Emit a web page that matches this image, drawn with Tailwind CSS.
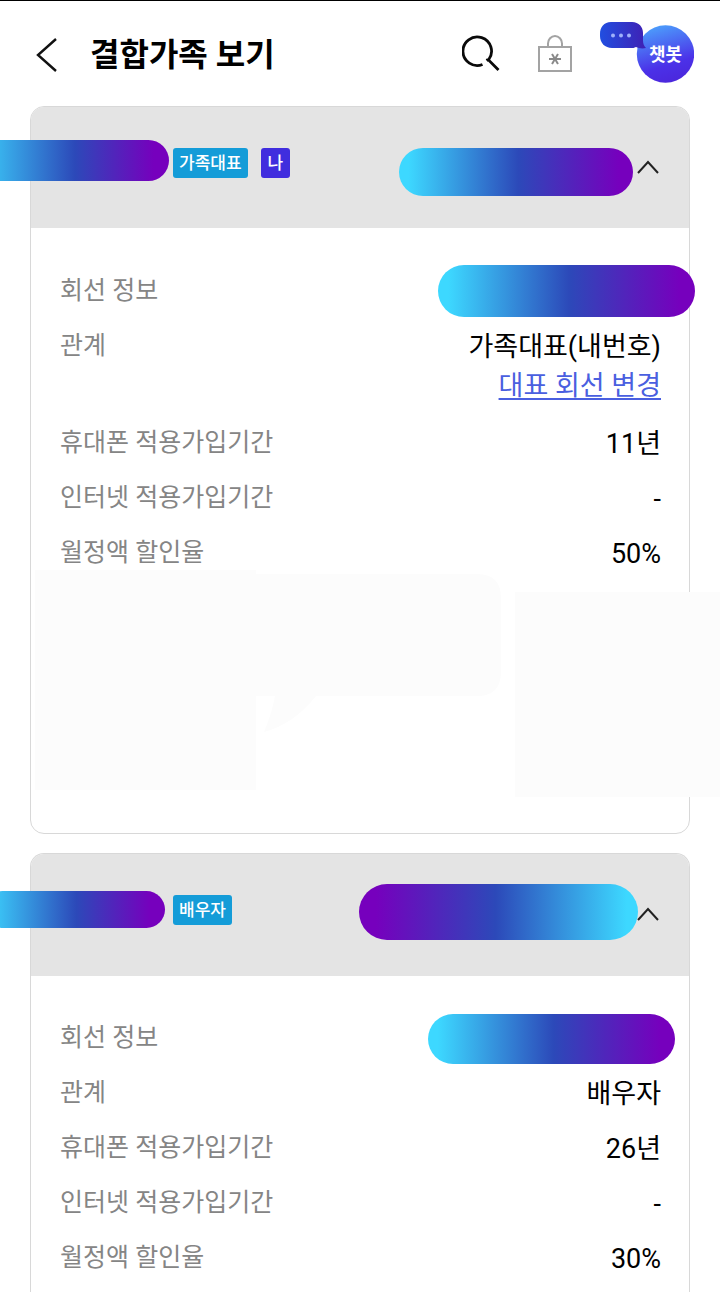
<!DOCTYPE html>
<html lang="ko">
<head>
<meta charset="utf-8">
<meta name="viewport" content="width=device-width, initial-scale=1">
<title>결합가족 보기</title>
<script src="https://cdn.jsdelivr.net/npm/@tailwindcss/browser@4"></script>
</head>
<body class="bg-white text-black font-[Roboto,'Noto_Sans_CJK_KR',sans-serif]">
<div class="flex min-h-screen flex-col overflow-hidden border-t border-black">
  <header class="flex h-[105px] shrink-0 items-center pl-[30px] pr-[26px]">
    <button type="button" aria-label="뒤로" class="w-[60px]">
      <svg class="h-[36px] w-[32px]" viewBox="0 0 32 36" fill="none" stroke="#111" stroke-width="2.4"><path d="M26 3 8 19l18 16" /></svg>
    </button>
    <h1 class="flex-1 pt-[2px] text-[32px] font-bold leading-10">결합가족 보기</h1>
    <div class="flex items-center pb-px">
      <button type="button" aria-label="검색" class="mr-[38px]">
        <svg class="block h-[38px] w-[38px]" viewBox="0 0 38 38" fill="none" stroke="#0a0a0a" stroke-width="2.8"><path d="M20.500 30.500A14.300 14.300 0 1 1 26.500 26L36.500 36M26 25.500l-1.500 1" /></svg>
      </button>
      <button type="button" aria-label="잠금" class="mr-[28px]">
        <svg class="block h-[38px] w-[34px]" viewBox="0 0 34 38" fill="none" stroke="#a3a3a3" stroke-width="2"><path d="M1 13h32v24H1zM10 13V9.500a7 7.500 0 0 1 14 0V13" /><path stroke="#8a8a8a" d="M11 25h12M14 20l6 10M20 20l-6 10" /></svg>
      </button>
      <button type="button" class="relative h-[62px] w-[94px]">
        <svg class="block h-[62px] w-[94px]" viewBox="0 0 94 62" aria-hidden="true">
          <defs>
            <linearGradient id="ball" x1=".3" y1="0" x2=".6" y2="1"><stop offset="0" stop-color="#4ca0fc" /><stop offset=".7" stop-color="#4b31e8" /><stop offset="1" stop-color="#4b27dc" /></linearGradient>
            <linearGradient id="talk"><stop offset="0" stop-color="#214ee0" /><stop offset="1" stop-color="#3f20b4" /></linearGradient>
          </defs>
          <circle cx="65.500" cy="32" r="28.700" fill="url(#ball)" />
          <path fill="url(#talk)" d="M11 0h21c7 0 11 5 11 11v7c0 4 1 6 3 8-4 1-8 0-10-1-2 1-3 1-5 1H12C5 26 0 21 0 14v-2C0 5 4 0 11 0z" />
          <g fill="#9fb0fa"><circle cx="13" cy="13.500" r="2" /><circle cx="21" cy="13.500" r="2" /><circle cx="29" cy="13.500" r="2" /></g>
        </svg>
        <span class="absolute left-[37px] top-[20px] w-[57px] text-center text-[18px] font-bold leading-[26px] text-white">챗봇</span>
      </button>
    </div>
  </header>

  <main class="flex flex-1 flex-col gap-[19px] px-[30px]">
    <section class="relative min-h-[728px] rounded-[14px] border border-[#d8d8d8]">
      <button type="button" aria-expanded="true" aria-label="가족대표 정보 접기" class="flex h-[121px] w-full items-center rounded-t-[13px] bg-[#e4e4e4] pb-[2px] pl-[142px] pr-[29px]">
        <span class="flex flex-1 gap-[13px] pb-2">
          <span class="rounded-[3px] bg-[#149cd8] px-[6px] text-[17px] font-medium leading-[30px] text-white">가족대표</span>
          <span class="rounded-[3px] bg-[#402dde] px-[7px] text-[17px] font-medium leading-[30px] text-white">나</span>
        </span>
        <svg class="h-[14px] w-[24px]" viewBox="0 0 24 14" fill="none" stroke="#222" stroke-width="2"><path d="M2 13 12 2l10 11" /></svg>
      </button>
      <span class="absolute -left-[50px] top-[33px] h-[41px] w-[188px] rounded-full bg-[linear-gradient(90deg,#3dd8ff_-5%,#2c49b9_50%,#7600bd_92%)]"></span>
      <span class="absolute right-[56px] top-[41px] h-[48px] w-[234px] rounded-full bg-[linear-gradient(90deg,#3dd8ff_4%,#2c49b9_51%,#7600bd_94%)]"></span>
      <dl class="flex flex-col gap-4 pl-[29px] pr-[28px] pt-[45px] text-[27px] leading-[39px]">
        <div class="flex justify-between">
          <dt class="text-[25px] leading-[36px] text-[#858585]">회선 정보</dt>
          <dd class="relative h-[39px] flex-1"><span class="absolute -right-[34px] -top-[8px] h-[52px] w-[257px] rounded-full bg-[linear-gradient(90deg,#3dd8ff_4%,#2c49b9_51%,#7600bd_94%)]"></span></dd>
        </div>
        <div class="flex justify-between pb-[3px]">
          <dt class="text-[25px] leading-[36px] text-[#858585]">관계</dt>
          <dd class="text-right">가족대표(내번호)<br><a href="#" class="text-[#4a5fe0] underline decoration-2 underline-offset-3">대표 회선 변경</a></dd>
        </div>
        <div class="flex justify-between"><dt class="text-[25px] leading-[36px] text-[#858585]">휴대폰 적용가입기간</dt><dd>11년</dd></div>
        <div class="flex justify-between"><dt class="text-[25px] leading-[36px] text-[#858585]">인터넷 적용가입기간</dt><dd>-</dd></div>
        <div class="flex justify-between"><dt class="text-[25px] leading-[36px] text-[#858585]">월정액 할인율</dt><dd>50%</dd></div>
      </dl>
      <!-- Faint shapes under the rows; the right one runs over the card's edge. -->
      <svg class="absolute left-[4px] top-[463px] h-[222px] w-[466px]" viewBox="0 0 466 222" fill="#fcfcfc" aria-hidden="true"><path d="M0 0h221v4h221q24 0 24 24v74q0 24-24 24H281q-22 28-52 36c4-10 8-20 11-36h-19v94H0z" /></svg>
      <div class="absolute -right-[31px] top-[485px] h-[205px] w-[205px] bg-[#fcfcfc]"></div>
    </section>

    <section class="relative flex-1 rounded-t-[14px] border border-b-0 border-[#d8d8d8]">
      <button type="button" aria-expanded="true" aria-label="배우자 정보 접기" class="flex h-[122px] w-full items-center rounded-t-[13px] bg-[#e4e4e4] pb-[2px] pl-[142px] pr-[29px]">
        <span class="flex flex-1 pb-2">
          <span class="rounded-[3px] bg-[#149cd8] px-[6px] text-[17px] font-medium leading-[30px] text-white">배우자</span>
        </span>
        <svg class="h-[14px] w-[24px]" viewBox="0 0 24 14" fill="none" stroke="#222" stroke-width="2"><path d="M2 13 12 2l10 11" /></svg>
      </button>
      <span class="absolute -left-[47px] top-[37px] h-[37px] w-[181px] rounded-full bg-[linear-gradient(90deg,#3dd8ff_0%,#2c49b9_51%,#7600bd_92%)]"></span>
      <span class="absolute right-[51px] top-[30px] h-[56px] w-[279px] rounded-full bg-[linear-gradient(90deg,#7600bd_6%,#2c49b9_49%,#3dd8ff_96%)]"></span>
      <dl class="flex flex-col gap-4 pl-[29px] pr-[28px] pt-[44px] text-[27px] leading-[39px]">
        <div class="flex justify-between">
          <dt class="text-[25px] leading-[36px] text-[#858585]">회선 정보</dt>
          <dd class="relative h-[39px] flex-1"><span class="absolute -right-[14px] -top-[6px] h-[50px] w-[247px] rounded-full bg-[linear-gradient(90deg,#3dd8ff_4%,#2c49b9_51%,#7600bd_94%)]"></span></dd>
        </div>
        <div class="flex justify-between"><dt class="text-[25px] leading-[36px] text-[#858585]">관계</dt><dd>배우자</dd></div>
        <div class="flex justify-between"><dt class="text-[25px] leading-[36px] text-[#858585]">휴대폰 적용가입기간</dt><dd>26년</dd></div>
        <div class="flex justify-between"><dt class="text-[25px] leading-[36px] text-[#858585]">인터넷 적용가입기간</dt><dd>-</dd></div>
        <div class="flex justify-between"><dt class="text-[25px] leading-[36px] text-[#858585]">월정액 할인율</dt><dd>30%</dd></div>
      </dl>
    </section>
  </main>
</div>
</body>
</html>
